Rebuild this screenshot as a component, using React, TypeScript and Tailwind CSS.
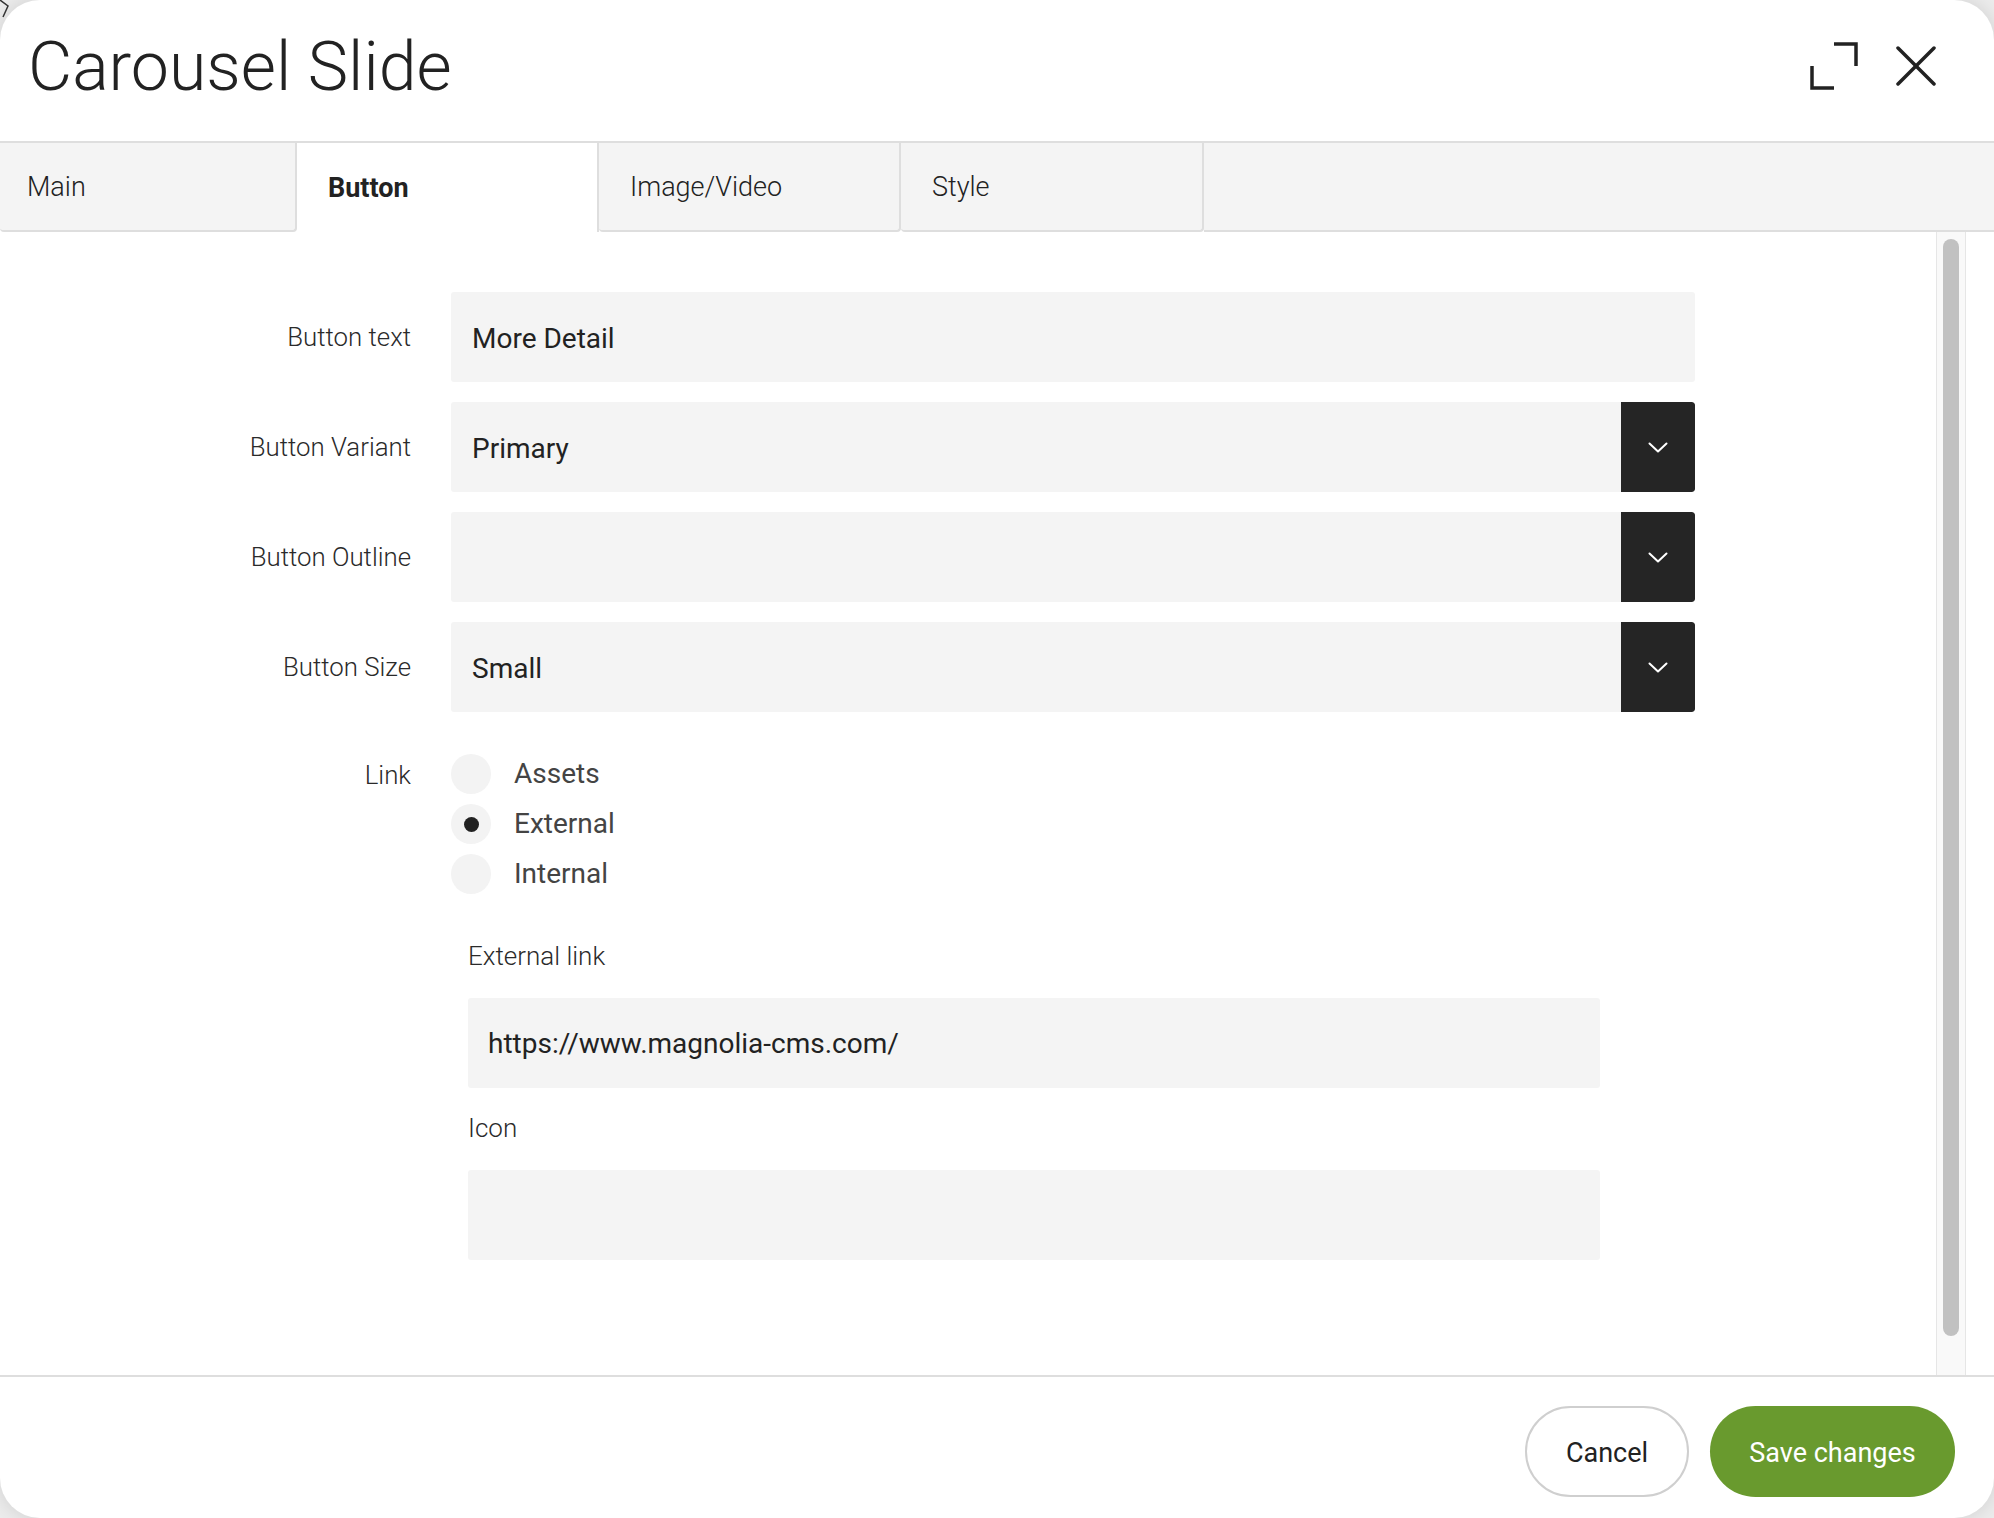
import React from "react";

const font = { fontFamily: "Roboto, 'Liberation Sans', sans-serif" };

function Chevron() {
  return (
    <svg width="20" height="11" viewBox="0 0 20 11" fill="none">
      <polyline points="1.5,1.5 10,9.5 18.5,1.5" stroke="#ffffff" strokeWidth="2" strokeLinecap="round" strokeLinejoin="round" />
    </svg>
  );
}

function SelectField({ value }: { value: string }) {
  return (
    <div className="flex h-[90px] w-[1244px] rounded-[3px] overflow-hidden">
      <div className="flex-1 bg-[#f4f4f4] flex items-center pl-[21px] pt-[3px] text-[28px] text-[#222]">{value}</div>
      <div className="w-[74px] bg-[#252525] flex items-center justify-center rounded-r-[3px]">
        <Chevron />
      </div>
    </div>
  );
}

function Label({ children }: { children: React.ReactNode }) {
  return (
    <div className="h-[90px] flex items-center justify-end text-[25.8px] font-light text-[#2a2a2a]">{children}</div>
  );
}

function Radio({ label, checked }: { label: string; checked?: boolean }) {
  return (
    <div className="h-[50px] flex items-center gap-[23px]">
      <div className="w-[40px] h-[40px] rounded-full bg-[#f3f3f3] flex items-center justify-center">
        {checked && <div className="w-[15px] h-[15px] rounded-full bg-[#222]" />}
      </div>
      <span className="text-[28px] text-[#444]">{label}</span>
    </div>
  );
}

export default function App() {
  const tabs = [
    { t: "Main", w: "w-[297px]", pl: "pl-[27px]" },
    { t: "Button", w: "w-[302px]", pl: "pl-[31px]" },
    { t: "Image/Video", w: "w-[302px]", pl: "pl-[31px]" },
    { t: "Style", w: "w-[303px]", pl: "pl-[31px]" },
  ];
  return (
    <div className="w-[1994px] h-[1518px] bg-[#ececec] relative overflow-hidden" style={font}>
      <div className="w-full h-full bg-white rounded-[40px] flex flex-col overflow-hidden shadow-[0_0_20px_rgba(0,0,0,0.12)]">
        {/* Header */}
        <div className="h-[143px] shrink-0 flex items-center justify-between pl-[28px] pr-[58px] border-b-2 border-[#dedede]">
          <h1 className="text-[68px] font-light text-[#222] leading-none -mt-[8px]">Carousel Slide</h1>
          <div className="flex items-center gap-[38px] -mt-[10px]">
            <svg width="48" height="48" viewBox="0 0 48 48" fill="none">
              <polyline points="24,2 46,2 46,24" stroke="#222" strokeWidth="3.5" />
              <polyline points="2,24 2,46 24,46" stroke="#222" strokeWidth="3.5" />
            </svg>
            <svg width="40" height="40" viewBox="0 0 40 40" fill="none">
              <line x1="2" y1="2" x2="38" y2="38" stroke="#222" strokeWidth="3.5" strokeLinecap="round" />
              <line x1="38" y1="2" x2="2" y2="38" stroke="#222" strokeWidth="3.5" strokeLinecap="round" />
            </svg>
          </div>
        </div>

        {/* Tabs */}
        <div className="h-[89px] shrink-0 flex">
          {tabs.map(({ t, w, pl }) => {
            const active = t === "Button";
            return (
              <div
                key={t}
                className={
                  active
                    ? `${w} ${pl} bg-white border-r-2 border-[#dedede] flex items-center pt-[2px] text-[27px] font-bold text-[#222]`
                    : `${w} ${pl} bg-[#f4f4f4] border-r-2 border-b-2 border-[#dedede] rounded-b-[4px] flex items-center pt-[2px] text-[27px] font-light text-[#222]`
                }
              >
                {t}
              </div>
            );
          })}
          <div className="flex-1 bg-[#f4f4f4] border-b-2 border-[#dedede]" />
        </div>

        {/* Content */}
        <div className="flex-1 flex min-h-0">
          <div className="flex-1 pt-[60px]">
            <div className="grid grid-cols-[411px_1244px] gap-x-[40px] gap-y-[20px]">
              <Label>Button text</Label>
              <div className="h-[90px] w-[1244px] bg-[#f4f4f4] rounded-[3px] flex items-center pl-[21px] pt-[3px] text-[28px] text-[#222]">More Detail</div>

              <Label>Button Variant</Label>
              <SelectField value="Primary" />

              <Label>Button Outline</Label>
              <SelectField value="" />

              <Label>Button Size</Label>
              <SelectField value="Small" />

              <div className="mt-[17px] h-[50px] flex items-center justify-end pt-[3px] text-[25.8px] font-light text-[#2a2a2a]">Link</div>
              <div className="mt-[17px]">
                <Radio label="Assets" />
                <Radio label="External" checked />
                <Radio label="Internal" />

                <div className="pl-[17px] mt-[42px] w-[1149px]">
                  <div className="h-[30px] flex items-center text-[26px] font-light text-[#2a2a2a]">External link</div>
                  <div className="mt-[27px] h-[90px] bg-[#f4f4f4] rounded-[3px] flex items-center pl-[20px] pt-[2px] text-[28px] text-[#222]">
                    https://www.magnolia-cms.com/
                  </div>
                  <div className="mt-[25px] h-[30px] flex items-center text-[26px] font-light text-[#2a2a2a]">Icon</div>
                  <div className="mt-[27px] h-[90px] bg-[#f4f4f4] rounded-[3px]" />
                </div>
              </div>
            </div>
          </div>
          {/* scrollbar */}
          <div className="w-[30px] mr-[28px] bg-[#f9f9f9] border-x border-[#e6e6e6] pt-[7px] flex justify-center">
            <div className="w-[16px] h-[1097px] rounded-full bg-[#c1c1c1]" />
          </div>
        </div>

        {/* Footer */}
        <div className="h-[143px] shrink-0 border-t-2 border-[#dedede] flex items-start justify-end pt-[29px] pr-[39px] gap-[21px]">
          <button className="h-[91px] w-[164px] rounded-full border-2 border-[#cfcfcf] bg-white pt-[3px] text-[27px] text-[#222]">Cancel</button>
          <button className="h-[91px] w-[245px] rounded-full bg-[#699a2e] pt-[3px] text-[27px] text-white">Save changes</button>
        </div>
      </div>
      <svg className="absolute left-0 top-0" width="12" height="18" viewBox="0 0 12 18" fill="none">
        <polyline points="0,0 8,6 3,17" stroke="#333" strokeWidth="1.5" />
      </svg>
    </div>
  );
}
